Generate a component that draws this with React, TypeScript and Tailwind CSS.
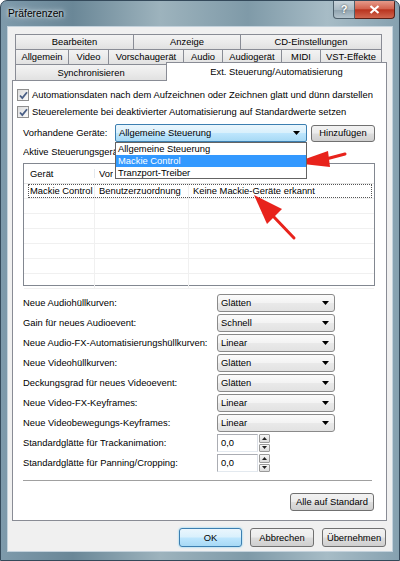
import type { ReactNode } from 'react';

const btnGray =
    'bg-[linear-gradient(#f2f2f2,#ebebeb_48%,#dddddd_52%,#cfcfcf)] border-[#707070]';
const btnBlue =
    'bg-[linear-gradient(#eaf6fd,#d9f0fc_48%,#bee6fd_52%,#a7d9f5)] border-[#3c7fb1]';

function Tab({ label, w, last }: { label: string; w: string; last?: boolean }) {
    return (
        <div
            className={`${w} ${last ? 'border-r' : ''} flex h-full items-center justify-center border-t border-l border-[#898c95] bg-[linear-gradient(#f3f3f3,#ebebeb_50%,#e1e1e1)]`}
        >
            {label}
        </div>
    );
}

function Arrow() {
    return (
        <svg width="7" height="4" viewBox="0 0 7 4" className="ml-auto shrink-0">
            <path d="M0 0h7L3.5 4z" fill="#000" />
        </svg>
    );
}

function Combo({ value }: { value: string }) {
    return (
        <div className="flex h-[18px] w-[118px] items-center rounded-[3px] border border-[#8a8a8a] bg-[linear-gradient(#fbfbfb,#f3f3f3_48%,#e9e9e9_52%,#e2e2e2)] pr-[5px] pl-[3px]">
            <span>{value}</span>
            <Arrow />
        </div>
    );
}

function Spin({ value }: { value: string }) {
    return (
        <div className="flex h-[18px] items-stretch">
            <div className="flex w-[41px] items-center border border-[#abadb3] border-r-[#dbdfe6] border-b-[#e3e9ef] bg-white pl-[3px]">
                {value}
            </div>
            <div className="ml-px flex w-[11px] flex-col gap-px">
                <div className="flex flex-1 items-center justify-center rounded-[1px] border border-[#9a9a9a] bg-[linear-gradient(#f6f6f6,#dcdcdc)]">
                    <svg width="5" height="3" viewBox="0 0 5 3">
                        <path d="M0 3h5L2.5 0z" fill="#222" />
                    </svg>
                </div>
                <div className="flex flex-1 items-center justify-center rounded-[1px] border border-[#9a9a9a] bg-[linear-gradient(#f6f6f6,#dcdcdc)]">
                    <svg width="5" height="3" viewBox="0 0 5 3">
                        <path d="M0 0h5L2.5 3z" fill="#222" />
                    </svg>
                </div>
            </div>
        </div>
    );
}

function Check({ children }: { children: ReactNode }) {
    return (
        <div className="-ml-[6px] flex h-[14px] items-center">
            <div className="flex h-[12px] w-[12px] items-center justify-center border border-[#8f8f8f] bg-[linear-gradient(135deg,#dcdcdc,#fafafa)]">
                <svg width="9" height="9" viewBox="0 0 9 9">
                    <path d="M1 4.5l2.3 2.6L8 1.2" fill="none" stroke="#4a5f86" strokeWidth="1.8" />
                </svg>
            </div>
            <span className="ml-[3px]">{children}</span>
        </div>
    );
}

function Row({ label, children }: { label: string; children: ReactNode }) {
    return (
        <div className="flex h-[20px] items-center">
            <span className="w-[194px] shrink-0">{label}</span>
            {children}
        </div>
    );
}

const settings: [string, string][] = [
    ['Neue Audiohüllkurven:', 'Glätten'],
    ['Gain für neues Audioevent:', 'Schnell'],
    ['Neue Audio-FX-Automatisierungshüllkurven:', 'Linear'],
    ['Neue Videohüllkurven:', 'Glätten'],
    ['Deckungsgrad für neues Videoevent:', 'Glätten'],
    ['Neue Video-FX-Keyframes:', 'Linear'],
    ['Neue Videobewegungs-Keyframes:', 'Linear'],
];

export default function App() {
    return (
        <div className="relative h-[561px] w-[400px] overflow-hidden rounded-t-[7px] border border-[#34495a] bg-[linear-gradient(90deg,#7e9aab,#6a8797_18%,#9db3bd_40%,#7f9aa8_62%,#a7bcc6_82%,#86a1b0)] font-['Liberation_Sans',Arial,sans-serif] text-[9.4px] leading-none text-black">
            {/* title bar */}
            <div className="flex h-[25px] items-start justify-between">
                <span className="pt-[8px] pl-[7px] text-[10.3px] [text-shadow:0_0_6px_#e8f0f4,0_0_3px_#e8f0f4]">
                    Präferenzen
                </span>
                <div className="mr-[4px] flex h-[18px]">
                    <div className="flex w-[22px] items-center justify-center rounded-bl-[4px] border border-t-0 border-[#4d5f6b] bg-[linear-gradient(#c8d3da,#a9b9c3_50%,#8ea2ae_52%,#b3c3cc)] text-[11px] font-bold text-white [text-shadow:0_0_2px_#333]">
                        ?
                    </div>
                    <div className="flex w-[40px] items-center justify-center rounded-br-[4px] border border-t-0 border-l-0 border-[#5a1f16] bg-[linear-gradient(#e59a8a,#d2634f_45%,#b9341f_52%,#d0664f)]">
                        <svg width="11" height="9" viewBox="0 0 11 9">
                            <path d="M1.5 1l8 7M9.5 1l-8 7" stroke="#fff" strokeWidth="2.2" />
                        </svg>
                    </div>
                </div>
            </div>

            {/* client area */}
            <div className="mx-[6px] flex h-[526px] flex-col border border-[#c4d2dc] bg-[#f0f0f0] pt-[7px] pr-[5px] pl-[4px]">
                {/* tab headers */}
                <div className="flex flex-col pl-[3px]">
                    <div className="flex h-[15px]">
                        <Tab label="Bearbeiten" w="w-[118px]" />
                        <Tab label="Anzeige" w="w-[107px]" />
                        <Tab label="CD-Einstellungen" w="w-[142px]" last />
                    </div>
                    <div className="flex h-[15px]">
                        <Tab label="Allgemein" w="w-[53px]" />
                        <Tab label="Video" w="w-[40px]" />
                        <Tab label="Vorschaugerät" w="w-[75px]" />
                        <Tab label="Audio" w="w-[39px]" />
                        <Tab label="Audiogerät" w="w-[59px]" />
                        <Tab label="MIDI" w="w-[39px]" />
                        <Tab label="VST-Effekte" w="w-[62px]" last />
                    </div>
                    <div className="flex h-[16px]">
                        <Tab label="Synchronisieren" w="w-[151px]" />
                        <div className="relative z-10 -mt-[2px] -mb-px flex h-[19px] w-[221px] items-start justify-center border border-b-0 border-[#898c95] bg-white pt-[4px]">
                            Ext. Steuerung/Automatisierung
                        </div>
                    </div>
                </div>

                {/* tab page */}
                <div className="flex h-[441px] flex-col border border-[#898c95] bg-white pr-[11px] pl-[10px]">
                    <div className="mt-[7px]">
                        <Check>Automationsdaten nach dem Aufzeichnen oder Zeichnen glatt und dünn darstellen</Check>
                    </div>
                    <div className="mt-[3px]">
                        <Check>Steuerelemente bei deaktivierter Automatisierung auf Standardwerte setzen</Check>
                    </div>

                    <div className="mt-[5px] flex h-[18px] items-center">
                        <span className="w-[92px] shrink-0">Vorhandene Geräte:</span>
                        <div className="relative z-20 h-full w-[192px]">
                            <div className={`flex h-full items-center rounded-[2px] border pr-[6px] pl-[3px] ${btnBlue}`}>
                                <span>Allgemeine Steuerung</span>
                                <Arrow />
                            </div>
                            {/* open dropdown */}
                            <div className="absolute top-full left-0 flex w-full flex-col border border-[#646464] bg-white">
                                <div className="flex h-[12px] items-center pl-[2px]">Allgemeine Steuerung</div>
                                <div className="flex h-[12px] items-center bg-[#3399ff] pl-[2px] text-white">Mackie Control</div>
                                <div className="flex h-[11px] items-center pl-[2px]">Tranzport-Treiber</div>
                            </div>
                        </div>
                        <div className={`ml-auto flex h-[17px] w-[64px] items-center justify-center rounded-[3px] border ${btnGray}`}>
                            Hinzufügen
                        </div>
                    </div>

                    <div className="mt-[4px] flex h-[12px] items-center">
                        <span className="w-[92px] overflow-hidden whitespace-nowrap">Aktive Steuerungsgeräte:</span>
                    </div>

                    {/* device list */}
                    <div className="mt-[5px] flex h-[123px] flex-col border border-[#828790] bg-white">
                        <div className="flex h-[20px] shrink-0 items-center border-b border-[#e5e5e5]">
                            <div className="w-[71px] border-r border-[#e3e8ee] pl-[6px]">Gerät</div>
                            <div className="w-[94px] border-r border-[#e3e8ee] pl-[4px]">
                                <div className="w-[14px] overflow-hidden whitespace-nowrap">Voreinstellung</div>
                            </div>
                            <div className="pl-[4px]" />
                        </div>
                        <div className="relative flex h-[15px] shrink-0 items-center border-b border-[#f0f0f0]">
                            <div className="absolute inset-y-0 right-[2px] left-[4px] border border-dotted border-[#555]" />
                            <div className="flex h-full w-[71px] items-center border-r border-[#f0f0f0] pl-[6px]">Mackie Control</div>
                            <div className="flex h-full w-[94px] items-center border-r border-[#f0f0f0] pl-[4px]">Benutzerzuordnung</div>
                            <div className="pl-[4px]">Keine Mackie-Geräte erkannt</div>
                        </div>
                        {[0, 1, 2, 3, 4, 5].map((i) => (
                            <div key={i} className="flex h-[15px] shrink-0 border-b border-[#f0f0f0]">
                                <div className="w-[71px] border-r border-[#f0f0f0]" />
                                <div className="w-[94px] border-r border-[#f0f0f0]" />
                            </div>
                        ))}
                    </div>

                    {/* defaults */}
                    <div className="mt-[7px] flex flex-col">
                        {settings.map(([label, value]) => (
                            <Row key={label} label={label}>
                                <Combo value={value} />
                            </Row>
                        ))}
                        <Row label="Standardglätte für Trackanimation:">
                            <Spin value="0,0" />
                        </Row>
                        <Row label="Standardglätte für Panning/Cropping:">
                            <Spin value="0,0" />
                        </Row>
                    </div>

                    <div className="mt-[7px] mr-[3px] h-[2px] border-t border-b border-t-[#a0a0a0] border-b-white" />

                    <div className={`mt-[11px] mr-[1px] flex h-[18px] w-[84px] items-center justify-center self-end rounded-[3px] border ${btnGray}`}>
                        Alle auf Standard
                    </div>
                </div>

                {/* dialog buttons */}
                <div className="mt-[7px] mr-[1px] flex justify-end gap-[8px]">
                    <div className={`flex h-[19px] w-[63px] items-center justify-center rounded-[3px] border shadow-[0_0_2px_#5fc8f5] ${btnBlue}`}>
                        OK
                    </div>
                    <div className={`flex h-[19px] w-[64px] items-center justify-center rounded-[3px] border ${btnGray}`}>
                        Abbrechen
                    </div>
                    <div className={`flex h-[19px] w-[64px] items-center justify-center rounded-[3px] border ${btnGray}`}>
                        Übernehmen
                    </div>
                </div>
            </div>

            {/* red annotation arrows */}
            <svg className="pointer-events-none absolute top-0 left-0" width="400" height="561" viewBox="0 0 400 561">
                <path d="M344 153L325 158" stroke="#e8231c" strokeWidth="3" strokeLinecap="round" />
                <path d="M293 162L327 150L329 166z" fill="#e8231c" />
                <path d="M293 237L272 215" stroke="#e8231c" strokeWidth="3" strokeLinecap="round" />
                <path d="M253 194L281 208L266 223z" fill="#e8231c" />
            </svg>
        </div>
    );
}
